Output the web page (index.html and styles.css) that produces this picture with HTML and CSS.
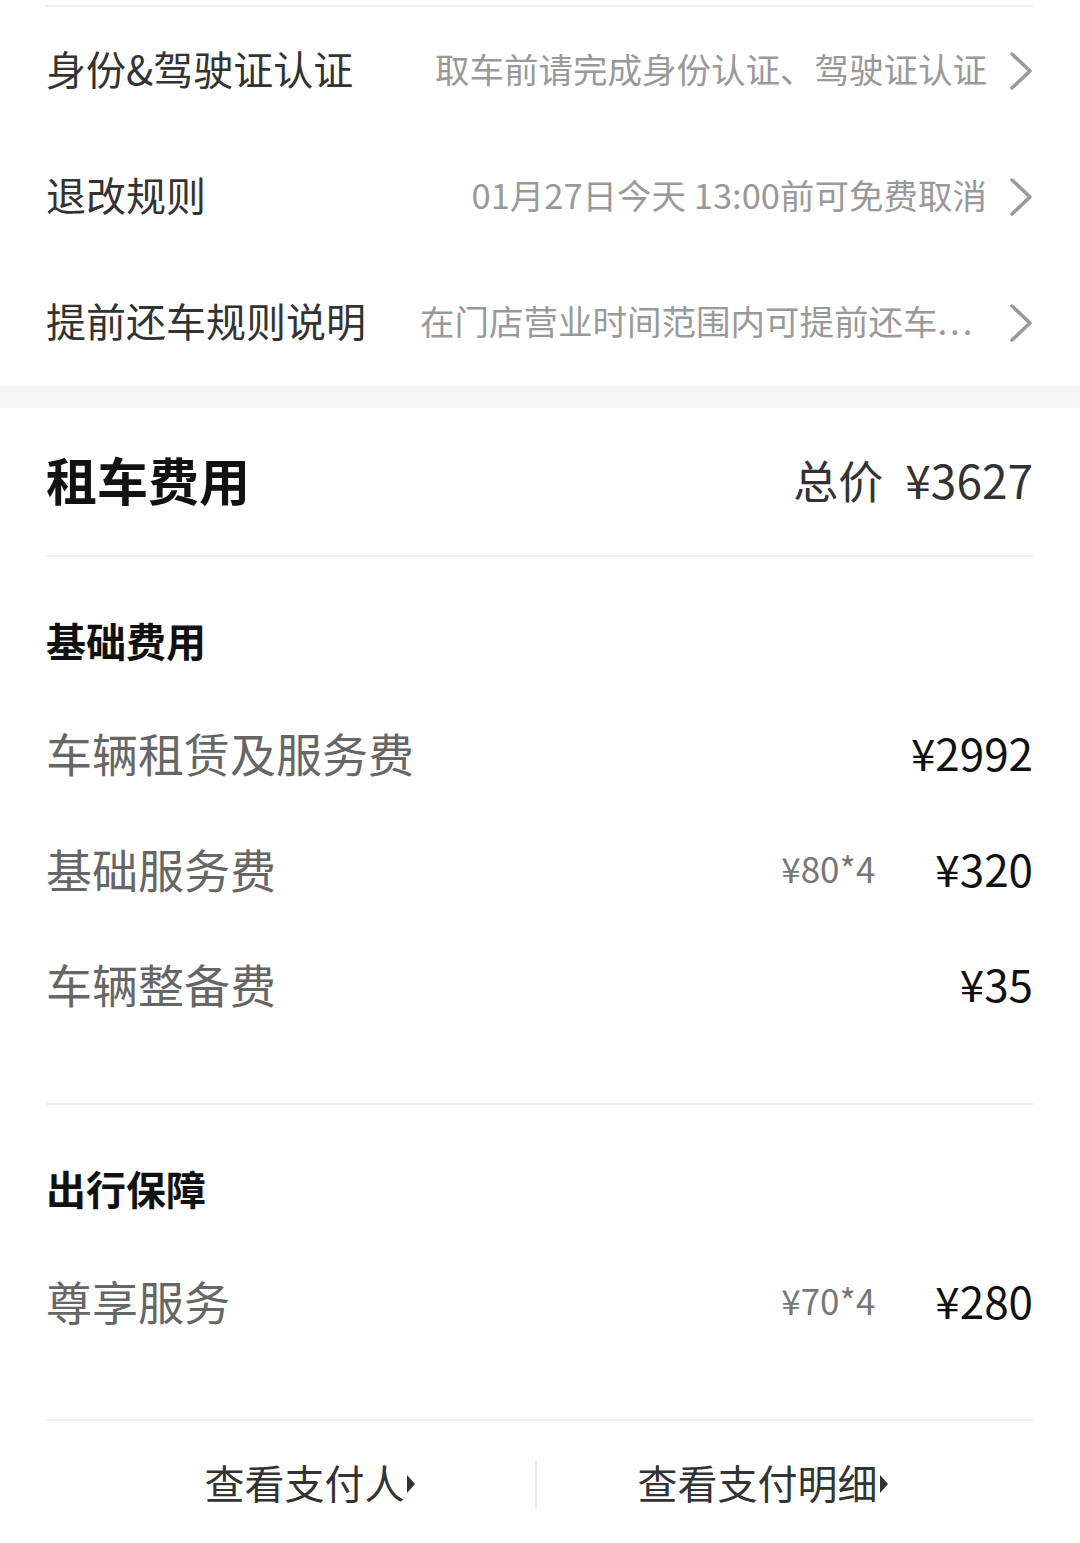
FILE: index.html
```html
<!DOCTYPE html>
<html lang="zh-CN">
<head>
    <meta charset="UTF-8">
    <meta name="viewport" content="width=device-width, initial-scale=1.0">
    <title>租车费用</title>
    <link rel="stylesheet" href="styles.css">
</head>
<body>
    <div class="rules">
        <div class="rule-row">
            <span class="rule-label">身份&amp;驾驶证认证</span>
            <span class="rule-value">取车前请完成身份认证、驾驶证认证</span>
            <svg class="chevron" viewBox="0 0 24 40"><polyline points="3,3 21,20 3,37"/></svg>
        </div>
        <div class="rule-row">
            <span class="rule-label">退改规则</span>
            <span class="rule-value">01月27日今天 13:00前可免费取消</span>
            <svg class="chevron" viewBox="0 0 24 40"><polyline points="3,3 21,20 3,37"/></svg>
        </div>
        <div class="rule-row">
            <span class="rule-label">提前还车规则说明</span>
            <span class="rule-value rule-value-cut">在门店营业时间范围内可提前还车<span class="dots">...</span></span>
            <svg class="chevron" viewBox="0 0 24 40"><polyline points="3,3 21,20 3,37"/></svg>
        </div>
    </div>

    <div class="gap"></div>

    <div class="fees">
        <div class="fees-header">
            <h2>租车费用</h2>
            <span class="total">总价<span class="total-num">¥3627</span></span>
        </div>

        <div class="fee-group">
            <h3>基础费用</h3>
            <div class="fee-row">
                <span class="fee-name">车辆租赁及服务费</span>
                <span class="fee-amount">¥2992</span>
            </div>
            <div class="fee-row">
                <span class="fee-name">基础服务费</span>
                <span class="fee-unit">¥80*4</span>
                <span class="fee-amount">¥320</span>
            </div>
            <div class="fee-row">
                <span class="fee-name">车辆整备费</span>
                <span class="fee-amount">¥35</span>
            </div>
        </div>

        <div class="fee-group">
            <h3>出行保障</h3>
            <div class="fee-row">
                <span class="fee-name">尊享服务</span>
                <span class="fee-unit">¥70*4</span>
                <span class="fee-amount">¥280</span>
            </div>
        </div>
    </div>

    <div class="actions">
        <a href="#" class="action">查看支付人<i class="arrow"></i></a>
        <span class="action-sep"></span>
        <a href="#" class="action">查看支付明细<i class="arrow"></i></a>
    </div>
</body>
</html>
```

FILE: styles.css
```css
body {
    font-family: "Noto Sans CJK SC", "Noto Sans", sans-serif;
    margin: 0;
    padding: 0;
    background-color: #fff;
    color: #333;
}
/* 顶部规则列表 */
.rules {
    margin: 0 47px 0 46px;
    padding-top: 5px;
}
.rules::before {
    content: '';
    display: block;
    height: 2px;
    background-color: #ededed;
    margin-bottom: 1px;
}
.rule-row {
    display: flex;
    align-items: center;
    box-sizing: border-box;
    height: 126px;
    padding-bottom: 6px;
}
.rule-label {
    font-size: 40px;
    color: #333;
    white-space: nowrap;
}
.rule-value {
    flex: 1;
    min-width: 0;
    margin-left: 54px;
    font-size: 34.5px;
    color: #999;
    text-align: right;
    white-space: nowrap;
}
.rule-value-cut {
    padding-right: 16px;
}
.dots {
    letter-spacing: 3px;
}
.chevron {
    width: 24px;
    height: 40px;
    margin: 6px 0 0 22px;
    flex-shrink: 0;
}
.chevron polyline {
    fill: none;
    stroke: #9a9a9a;
    stroke-width: 3.5;
    stroke-linecap: round;
    stroke-linejoin: round;
}
.gap {
    height: 22px;
    background-color: #f5f5f5;
}
/* 费用 */
.fees {
    padding: 0 47px 0 46px;
}
.fees-header {
    display: flex;
    align-items: center;
    justify-content: space-between;
    box-sizing: border-box;
    height: 149px;
    padding-bottom: 6px;
    border-bottom: 2px solid #ededed;
}
.fees-header h2 {
    margin: 0;
    font-size: 51px;
    font-weight: bold;
    color: #111;
}
.total {
    font-size: 45px;
    color: #333;
}
.total-num {
    margin-left: 22px;
    font-size: 46px;
}
.fee-group {
    padding: 55px 0 58px;
    border-bottom: 2px solid #ededed;
}
.fee-group h3 {
    margin: 0 0 30px;
    line-height: 56px;
    font-size: 40px;
    font-weight: bold;
    color: #111;
}
.fee-row {
    display: flex;
    align-items: center;
    box-sizing: border-box;
    height: 115.5px;
    padding-bottom: 7px;
}
.fee-name {
    flex: 1;
    font-size: 46px;
    color: #666;
}
.fee-unit {
    font-size: 35px;
    color: #777;
    margin-right: 60px;
}
.fee-amount {
    font-size: 44px;
    color: #111;
}
/* 底部按钮 */
.actions {
    display: flex;
    align-items: center;
    height: 112px;
    padding: 5px 92px 0 84px;
}
.action {
    flex: 1;
    display: flex;
    align-items: center;
    justify-content: center;
    font-size: 40px;
    color: #333;
    text-decoration: none;
}
.arrow {
    display: inline-block;
    width: 0;
    height: 0;
    margin: 4px 0 0 2px;
    border-top: 9px solid transparent;
    border-bottom: 9px solid transparent;
    border-left: 8px solid #333;
}
.action-sep {
    width: 2px;
    height: 48px;
    margin-top: 5px;
    background-color: #ececec;
}
```
